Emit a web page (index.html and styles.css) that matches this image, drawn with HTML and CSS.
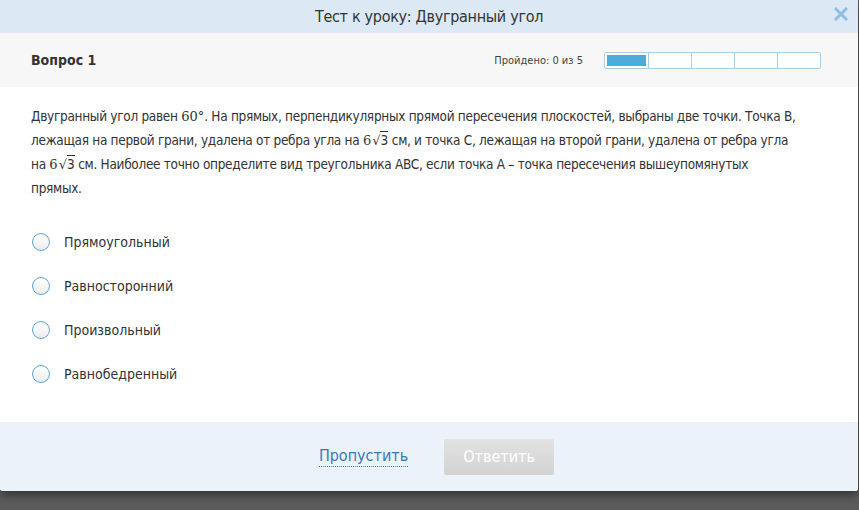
FILE: index.html
```html
<!DOCTYPE html>
<html lang="ru">
<head>
  <meta charset="UTF-8" />
  <title>Тест к уроку: Двугранный угол</title>
  <link rel="stylesheet" href="styles.css">
</head>
<body>

<div class="modal">
  <div class="modal-head">
    <h1>Тест к уроку: Двугранный угол</h1>
    <svg class="close" width="14" height="14" viewBox="0 0 14 14">
      <path d="M2 2 L12 12 M12 2 L2 12" stroke="#8dbfe6" stroke-width="3" stroke-linecap="square" />
    </svg>
  </div>

  <div class="question-bar">
    <div class="question-num">Вопрос 1</div>
    <div class="progress">
      <span class="progress-label">Пройдено: 0 из 5</span>
      <div class="progress-track">
        <div class="step current"><span></span></div>
        <div class="step"></div>
        <div class="step"></div>
        <div class="step"></div>
        <div class="step"></div>
      </div>
    </div>
  </div>

  <div class="question-body">
    <p class="question-text">
      Двугранный угол равен <span class="math">60°</span>. На прямых, перпендикулярных прямой пересечения плоскостей, выбраны две точки. Точка B, лежащая на первой грани, удалена от ребра угла на <span class="math">6<span class="sqrt">√<span class="rad">3</span></span></span> см, и точка C, лежащая на второй грани, удалена от ребра угла на <span class="math">6<span class="sqrt">√<span class="rad">3</span></span></span> см. Наиболее точно определите вид треугольника ABC, если точка A – точка пересечения вышеупомянутых прямых.
    </p>

    <ul class="answers">
      <li><span class="radio"></span>Прямоугольный</li>
      <li><span class="radio"></span>Равносторонний</li>
      <li><span class="radio"></span>Произвольный</li>
      <li><span class="radio"></span>Равнобедренный</li>
    </ul>
  </div>

  <div class="modal-foot">
    <a href="#" class="skip">Пропустить</a>
    <button class="answer" disabled>Ответить</button>
  </div>
</div>

</body>
</html>
```

FILE: styles.css
```css
body {
  margin: 0;
  padding: 0;
  background: #5b5b5b;
  font-family: "DejaVu Sans Condensed", "Liberation Sans", sans-serif;
  color: #333;
  height: 510px;
  overflow: hidden;
}
.modal {
  width: 858px;
  background: white;
  border-radius: 0 0 3px 3px;
  box-shadow: 0 4px 10px rgba(0,0,0,0.45);
}

/* Header */
.modal-head {
  height: 33px;
  background: #dce9f5;
  display: flex;
  align-items: center;
  justify-content: center;
  position: relative;
}
.modal-head h1 {
  margin: 0;
  font-size: 16px;
  letter-spacing: -0.3px;
  font-weight: normal;
  color: #333;
}
.close {
  position: absolute;
  right: 10px;
  top: 7px;
  cursor: pointer;
}

/* Question number + progress */
.question-bar {
  height: 54px;
  background: #f7f7f7;
  display: flex;
  align-items: center;
  justify-content: space-between;
  padding: 0 37px 0 31px;
}
.question-num {
  font-size: 14px;
  font-weight: bold;
  color: #333;
}
.progress {
  display: flex;
  align-items: center;
  gap: 21px;
}
.progress-label {
  font-size: 11px;
  color: #444;
}
.progress-track {
  display: flex;
  border: 1px solid #a9d0ea;
  border-radius: 2px;
  background: white;
  height: 15px;
}
.step {
  width: 43px;
  border-left: 1px solid #a9d0ea;
  padding: 2px;
  box-sizing: border-box;
}
.step:first-child {
  border-left: none;
}
.step.current span {
  display: block;
  height: 100%;
  background: #4dacdc;
}

/* Question */
.question-body {
  padding: 17px 57px 26px 31px;
}
.question-text {
  margin: 0 0 20px;
  font-size: 13.5px;
  line-height: 24px;
  letter-spacing: -0.3px;
  color: #333;
}
.math {
  font-family: "DejaVu Serif", serif;
  font-size: 13px;
  line-height: 1;
  letter-spacing: 0;
}
.sqrt {
  margin-left: 1px;
}
.rad {
  border-top: 1px solid #333;
  font-family: "DejaVu Sans Condensed", sans-serif;
  font-size: 13.5px;
  line-height: 1;
}
.answers {
  list-style: none;
  margin: 0;
  padding: 0;
}
.answers li {
  display: flex;
  align-items: center;
  height: 44px;
  font-size: 14px;
  color: #333;
}
.radio {
  width: 16px;
  height: 16px;
  border: 1.5px solid #5fa5dd;
  border-radius: 50%;
  background: linear-gradient(#ffffff, #ececec);
  margin: 0 14px 0 1px;
}

/* Footer */
.modal-foot {
  height: 69px;
  background: #ebf2f9;
  display: flex;
  align-items: center;
  justify-content: center;
  gap: 36px;
  padding-left: 15px;
  border-radius: 0 0 3px 3px;
}
.skip {
  color: #3b78b9;
  font-size: 16px;
  text-decoration: none;
  border-bottom: 1px dotted #3b78b9;
  padding-bottom: 1px;
}
.answer {
  width: 110px;
  height: 36px;
  border: none;
  border-radius: 2px;
  background: linear-gradient(#e2e2e2, #d3d3d3);
  color: white;
  font-family: inherit;
  font-size: 16px;
}
```
